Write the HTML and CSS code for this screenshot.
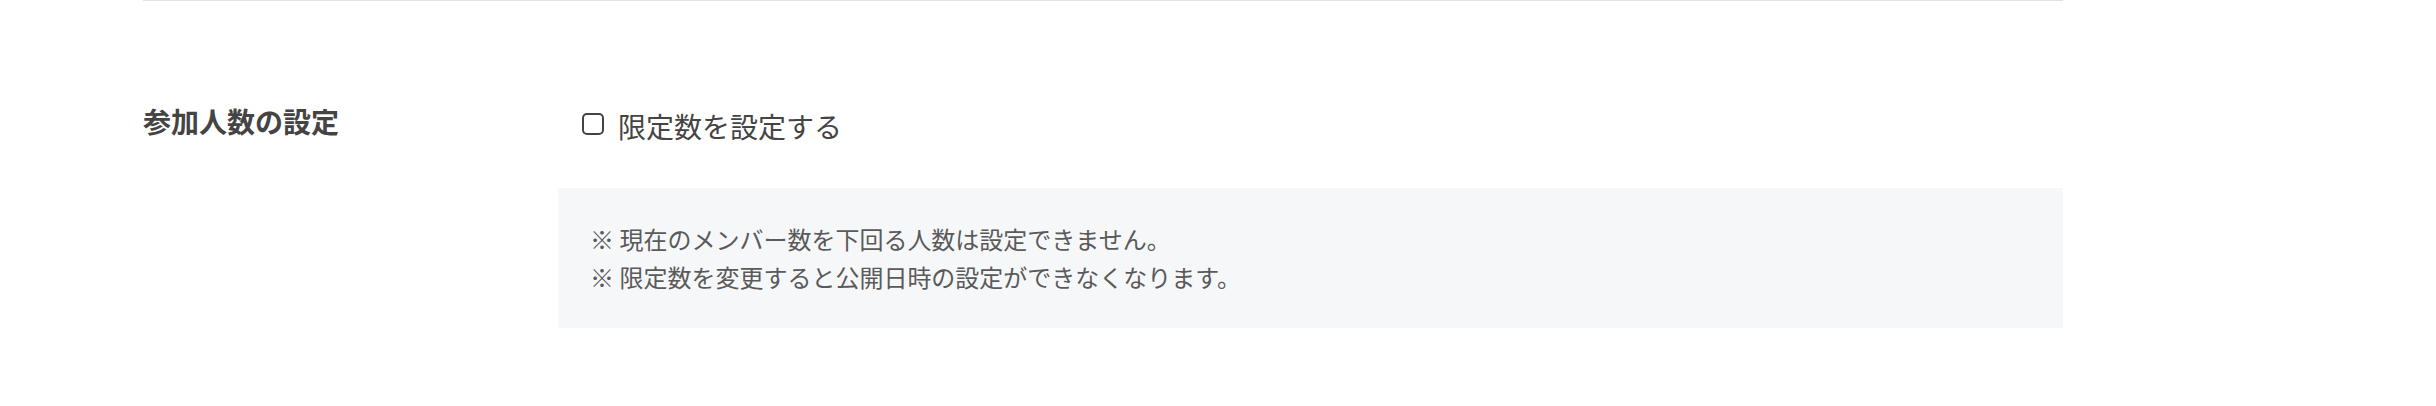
FILE: index.html
```html
<!DOCTYPE html>
<html lang="ja">
<head>
    <meta charset="UTF-8">
    <meta name="viewport" content="width=device-width, initial-scale=1.0">
    <title>参加人数の設定</title>
    <link rel="stylesheet" href="styles.css">
</head>
<body>
<div class="settings">
    <div class="setting-row">
        <div class="setting-label">参加人数の設定</div>

        <div class="setting-body">
            <label class="check-option" for="limitCount">
                <input type="checkbox" id="limitCount">
                <span class="check-box"></span>
                <span class="check-text">限定数を設定する</span>
            </label>

            <div class="notice">
                <p>※ 現在のメンバー数を下回る人数は設定できません。</p>
                <p>※ 限定数を変更すると公開日時の設定ができなくなります。</p>
            </div>
        </div>
    </div>
</div>
</body>
</html>
```

FILE: styles.css
```css
body {
    margin: 0;
    font-family: "Noto Sans CJK JP", "Noto Sans", sans-serif;
    color: #444;
    background: #fff;
}
.settings {
    width: 1920px;
    margin-left: 143px;
    border-top: 1px solid #e2e2e8;
}
.setting-row {
    display: grid;
    grid-template-columns: 415px 1fr;
    padding-top: 99px;
}
.setting-label {
    font-size: 28px;
    font-weight: bold;
    line-height: 42px;
    color: #444;
}
.setting-body {
    display: flex;
    flex-direction: column;
}
.check-option {
    display: flex;
    align-items: center;
    gap: 14px;
    margin-top: 5px;
    padding-left: 24px;
    height: 42px;
    cursor: pointer;
}
.check-option input {
    display: none;
}
.check-box {
    flex-shrink: 0;
    box-sizing: border-box;
    width: 22px;
    height: 22px;
    border: 2.5px solid #444;
    border-radius: 5px;
    margin-top: -5px;
}
.check-text {
    font-size: 28px;
    line-height: 42px;
    color: #444;
}
.notice {
    margin-top: 41px;
    background-color: #f6f7f9;
    padding: 32px 32px 32px;
}
.notice p {
    margin: 0;
    font-size: 24px;
    line-height: 38px;
    color: #5a5a5a;
}
```
